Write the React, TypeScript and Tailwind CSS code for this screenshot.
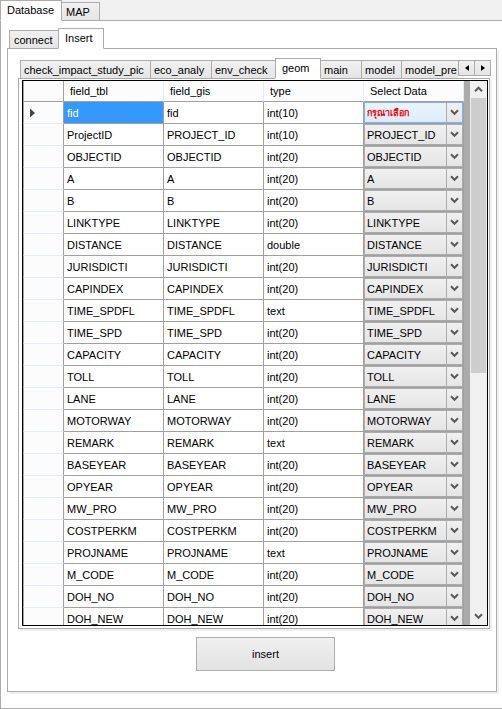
import React, { useState } from 'react';

const rows: [string, string, string][] = [
  ['fid', 'fid', 'int(10)'],
  ['ProjectID', 'PROJECT_ID', 'int(10)'],
  ['OBJECTID', 'OBJECTID', 'int(20)'],
  ['A', 'A', 'int(20)'],
  ['B', 'B', 'int(20)'],
  ['LINKTYPE', 'LINKTYPE', 'int(20)'],
  ['DISTANCE', 'DISTANCE', 'double'],
  ['JURISDICTI', 'JURISDICTI', 'int(20)'],
  ['CAPINDEX', 'CAPINDEX', 'int(20)'],
  ['TIME_SPDFL', 'TIME_SPDFL', 'text'],
  ['TIME_SPD', 'TIME_SPD', 'int(20)'],
  ['CAPACITY', 'CAPACITY', 'int(20)'],
  ['TOLL', 'TOLL', 'int(20)'],
  ['LANE', 'LANE', 'int(20)'],
  ['MOTORWAY', 'MOTORWAY', 'int(20)'],
  ['REMARK', 'REMARK', 'text'],
  ['BASEYEAR', 'BASEYEAR', 'int(20)'],
  ['OPYEAR', 'OPYEAR', 'int(20)'],
  ['MW_PRO', 'MW_PRO', 'int(20)'],
  ['COSTPERKM', 'COSTPERKM', 'int(20)'],
  ['PROJNAME', 'PROJNAME', 'text'],
  ['M_CODE', 'M_CODE', 'int(20)'],
  ['DOH_NO', 'DOH_NO', 'int(20)'],
  ['DOH_NEW', 'DOH_NEW', 'int(20)'],
];

const PROMPT = 'กรุณาเลือก';

type TabProps = { label: string; width: string; active?: boolean; first?: boolean; dense?: boolean };

function Tab({ label, width, active, first, dense }: TabProps) {
  const look = active
    ? 'z-10 h-[21px] border-b-white bg-white pb-[2px] pl-[6px]'
    : `h-[19px] bg-linear-to-b from-[#f0f0f0] to-[#e5e5e5] ${dense ? 'pl-[3px]' : 'pl-1'}`;
  return (
    <button
      type="button"
      role="tab"
      aria-selected={!!active}
      className={`relative flex shrink-0 items-center border border-[#acacac] whitespace-nowrap ${
        first ? '' : '-ml-px'
      } ${look} ${width}`}
    >
      {label}
    </button>
  );
}

function Chevron({ up }: { up?: boolean }) {
  return (
    <svg width="9" height="7" viewBox="0 0 9 7" fill="none" stroke="#5a5a5a" strokeWidth="2" aria-hidden="true">
      <path d={up ? 'M1 5.2 4.5 1.7 8 5.2' : 'M1 1.3 4.5 4.8 8 1.3'} />
    </svg>
  );
}

function SelectCell({ name, prompt }: { name: string; prompt?: boolean }) {
  const text = prompt ? PROMPT : name;
  return (
    <div
      className={`relative h-[21px] border ${
        prompt
          ? 'border-[#7eb4ea] bg-linear-to-b from-[#ebf4fc] to-[#dcecfc]'
          : 'border-[#acacac] bg-linear-to-b from-[#f0f0f0] to-[#e5e5e5]'
      }`}
    >
      <select
        aria-label={`Select data for ${name}`}
        defaultValue={text}
        className={`block h-[19px] w-full appearance-none bg-transparent pl-[2px] outline-none ${
          prompt ? 'text-[9px] font-bold text-[#ff0000]' : ''
        }`}
      >
        <option value={text}>{text}</option>
      </select>
      <span className="pointer-events-none absolute inset-y-0 right-0 flex w-4 items-center justify-center border-l border-[#acacac] bg-linear-to-b from-[#f0f0f0] to-[#e5e5e5]">
        <Chevron />
      </span>
    </div>
  );
}

function Grid() {
  const [selected, setSelected] = useState(0);
  const head = 'h-[21px] border-b border-b-[#a0a0a0] border-r border-r-[#e3edf8] bg-[#fcfcfc] p-0 pl-[6px] text-left font-normal';
  const cell = 'h-[22px] border-r border-b border-[#a0a0a0] p-0 pl-[3px]';
  return (
    <div className="flex h-[546px] overflow-hidden border border-black bg-[#ababab]">
      <div className="h-full flex-1 overflow-hidden">
        <table className="w-full table-fixed border-separate border-spacing-0 bg-white">
          <colgroup>
            <col className="w-[41px]" />
            <col />
            <col />
            <col />
            <col />
          </colgroup>
          <thead>
            <tr>
              <th className="border-r border-b border-l border-[#a0a0a0] bg-[#fcfcfc] p-0" aria-label="Row" />
              <th className={head}>field_tbl</th>
              <th className={head}>field_gis</th>
              <th className={head}>type</th>
              <th className={head}>Select Data</th>
            </tr>
          </thead>
          <tbody>
            {rows.map(([tbl, gis, type], i) => (
              <tr key={tbl} onClick={() => setSelected(i)}>
                <th className="h-[22px] border-r border-b border-l border-r-[#a0a0a0] border-b-[#e3edf8] border-l-[#a0a0a0] bg-[#fcfcfc] p-0 pl-[6px]">
                  {selected === i && (
                    <svg width="6" height="10" viewBox="0 0 6 10" className="block" aria-hidden="true">
                      <path d="M0 0.5 5 5 0 9.5Z" fill="#444" />
                    </svg>
                  )}
                </th>
                <td className={`${cell} ${selected === i ? 'bg-[#3399ff] text-white' : ''}`}>{tbl}</td>
                <td className={cell}>{gis}</td>
                <td className={cell}>{type}</td>
                <td className="h-[22px] border-r border-b border-[#a0a0a0] p-0">
                  <SelectCell name={gis} prompt={i === 0} />
                </td>
              </tr>
            ))}
          </tbody>
        </table>
      </div>
      <div className="ml-[6px] flex w-[17px] shrink-0 flex-col bg-[#f0f0f0]">
        <button type="button" aria-label="Scroll up" className="flex h-[17px] items-center justify-center">
          <Chevron up />
        </button>
        <div className="mx-px h-[275px] bg-[#cdcdcd]" />
        <button type="button" aria-label="Scroll down" className="mt-auto flex h-[17px] items-center justify-center">
          <Chevron />
        </button>
      </div>
    </div>
  );
}

export default function App() {
  const arrow = 'flex h-4 w-[17px] items-center justify-center border border-[#acacac] bg-linear-to-b from-[#f0f0f0] to-[#e5e5e5]';
  return (
    <main className="bg-[#f0f0f0] font-['Liberation_Sans','Noto_Sans',sans-serif] text-[11px] leading-4 text-black">
      <div role="tablist" className="-mb-px flex items-end">
        <Tab label="Database" width="w-[62px]" active first />
        <Tab label="MAP" width="w-[39px]" />
      </div>
      <section className="border-t border-b border-l border-[#acacac] bg-white pt-[7px] pr-[5px] pb-4 pl-[6px]">
        <div role="tablist" className="-mb-px flex items-end pl-[2px]">
          <Tab label="connect" width="w-[50px]" first />
          <Tab label="Insert" width="w-[46px]" active />
        </div>
        <section className="border border-[#acacac] pt-[9px] pr-[5px] pb-5 pl-[10px] shadow-[2px_2px_0_#f0f0f0]">
          <div className="relative -mb-px flex items-end justify-between">
            <div role="tablist" className="flex min-w-0 flex-1 items-end overflow-hidden pl-[2px]">
              <Tab label="check_impact_study_pic" width="w-[131px]" first dense />
              <Tab label="eco_analy" width="w-[62px]" dense />
              <Tab label="env_check" width="w-[65px]" dense />
              <Tab label="geom" width="w-[46px]" active />
              <Tab label="main" width="w-[42px]" dense />
              <Tab label="model" width="w-[41px]" dense />
              <Tab label="model_pre" width="w-[66px]" dense />
            </div>
            <div className="mb-[3px] flex">
              <button type="button" aria-label="Previous tabs" className={arrow}>
                <svg width="4" height="6" viewBox="0 0 4 6" aria-hidden="true"><path d="M4 0 0 3 4 6Z" /></svg>
              </button>
              <button type="button" aria-label="Next tabs" className={`${arrow} -ml-px`}>
                <svg width="4" height="6" viewBox="0 0 4 6" aria-hidden="true"><path d="M0 0 4 3 0 6Z" /></svg>
              </button>
            </div>
          </div>
          <section className="mr-px border border-[#acacac] pt-px pr-px pb-[2px] pl-[3px] shadow-[2px_2px_0_#f0f0f0]">
            <Grid />
          </section>
          <div className="mt-2 flex justify-center pl-[22px]">
            <button
              type="button"
              className="h-[34px] w-[139px] border border-[#acacac] bg-linear-to-b from-[#f0f0f0] to-[#e3e3e3]"
            >
              insert
            </button>
          </div>
        </section>
      </section>
    </main>
  );
}
